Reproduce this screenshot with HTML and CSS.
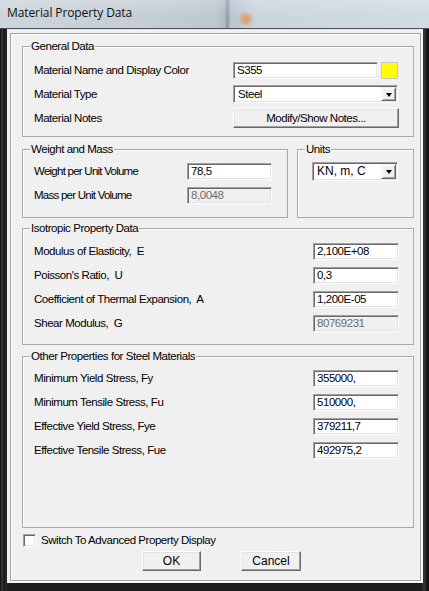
FILE: index.html
```html
<!DOCTYPE html>
<html>
<head>
<meta charset="utf-8">
<title>Material Property Data</title>
<link rel="stylesheet" href="styles.css">
</head>
<body>
<div class="window">
  <div class="titlebar">
    <span class="title">Material Property Data</span>
    <span class="glass-blob"></span>
  </div>
  <div class="frame">
    <div class="client">
      <div class="panel">
        <fieldset class="group general">
          <legend>General Data</legend>
          <div class="rows">
            <div class="row">
              <span class="label wide">Material Name and Display Color</span>
              <span class="textbox name">S355</span>
              <span class="swatch"></span>
            </div>
            <div class="row">
              <span class="label wide">Material Type</span>
              <span class="combo type"><span class="combo-text">Steel</span><span class="drop"><span class="tri"></span></span></span>
            </div>
            <div class="row">
              <span class="label wide">Material Notes</span>
              <span class="btn notes">Modify/Show Notes...</span>
            </div>
          </div>
        </fieldset>

        <div class="pair">
          <fieldset class="group weight">
            <legend>Weight and Mass</legend>
            <div class="rows">
              <div class="row">
                <span class="label mid">Weight per Unit Volume</span>
                <span class="textbox short">78,5</span>
              </div>
              <div class="row">
                <span class="label mid">Mass per Unit Volume</span>
                <span class="textbox short disabled">8,0048</span>
              </div>
            </div>
          </fieldset>
          <fieldset class="group units">
            <legend>Units</legend>
            <div class="rows">
              <div class="row">
                <span class="combo unit"><span class="combo-text">KN, m, C</span><span class="drop"><span class="tri"></span></span></span>
              </div>
            </div>
          </fieldset>
        </div>

        <fieldset class="group iso">
          <legend>Isotropic Property Data</legend>
          <div class="rows">
            <div class="row"><span class="label grow">Modulus of Elasticity,&nbsp; E</span><span class="textbox value">2,100E+08</span></div>
            <div class="row"><span class="label grow">Poisson's Ratio,&nbsp; U</span><span class="textbox value">0,3</span></div>
            <div class="row"><span class="label grow">Coefficient of Thermal Expansion,&nbsp; A</span><span class="textbox value">1,200E-05</span></div>
            <div class="row"><span class="label grow">Shear Modulus,&nbsp; G</span><span class="textbox value disabled">80769231</span></div>
          </div>
        </fieldset>

        <fieldset class="group other">
          <legend>Other Properties for Steel Materials</legend>
          <div class="rows">
            <div class="row"><span class="label grow">Minimum Yield Stress, Fy</span><span class="textbox value">355000,</span></div>
            <div class="row"><span class="label grow">Minimum Tensile Stress, Fu</span><span class="textbox value">510000,</span></div>
            <div class="row"><span class="label grow">Effective Yield Stress, Fye</span><span class="textbox value">379211,7</span></div>
            <div class="row"><span class="label grow">Effective Tensile Stress, Fue</span><span class="textbox value">492975,2</span></div>
          </div>
        </fieldset>

        <div class="check">
          <span class="checkbox"></span>
          <span class="check-label">Switch To Advanced Property Display</span>
        </div>

        <div class="buttons">
          <span class="btn ok">OK</span>
          <span class="btn cancel">Cancel</span>
        </div>
      </div>
    </div>
  </div>
</div>
</body>
</html>
```

FILE: styles.css
```css
html, body {
  margin: 0;
  padding: 0;
  background: #1a1a1a;
}

body {
  width: 429px;
  height: 591px;
  overflow: hidden;
  font-family: "Liberation Sans", Arial, sans-serif;
  font-size: 11.5px;
  letter-spacing: -0.45px;
  color: #000;
}

.window {
  width: 429px;
  height: 591px;
  display: flex;
  flex-direction: column;
}

.titlebar {
  height: 29px;
  flex: none;
  position: relative;
  display: flex;
  align-items: center;
  padding-left: 7px;
  padding-bottom: 3px;
  box-sizing: border-box;
  background:
    linear-gradient(to bottom, rgba(255,255,255,0.2) 0, rgba(255,255,255,0) 60%),
    linear-gradient(to right, #cdd5dc 0, #c6cfd7 30%, #bfc8d0 50%, #b2bcc5 52.3%, #8e98a2 53%, #bac5cf 53.8%, #cbd5de 60%, #d2dbe3 100%);
  border-bottom: 1px solid #4a4f55;
}

.title {
  font-family: "Open Sans", "Noto Sans", "Liberation Sans", sans-serif;
  font-size: 12px;
  letter-spacing: -0.1px;
  color: #101010;
}

.glass-blob {
  position: absolute;
  left: 238px;
  top: 12px;
  width: 16px;
  height: 14px;
  border-radius: 50%;
  background: radial-gradient(circle, rgba(235,130,40,0.7) 0, rgba(235,130,40,0.3) 50%, rgba(235,130,40,0) 75%);
}

.frame {
  flex: 1;
  display: flex;
  padding: 0 6px 8px 7px;
  background: linear-gradient(to right, #0c0c0c 0, #3a3a3a 2px, #151515 4px, #2b2b2b 6px, #1d1d1d 7px, #1d1d1d 422px, #3c3c3c 424px, #121212 427px);
}

.client {
  flex: 1;
  background: #f0f0f0;
  padding: 3px 2px 2px 3px;
  display: flex;
  border-top: 1px solid #e6e6e6;
}

.panel {
  flex: 1;
  display: flex;
  flex-direction: column;
  border: 1px solid #a0a0a0;
  box-shadow: inset 1px 1px 0 #ffffff, 1px 1px 0 #ffffff;
  padding: 5px 6px 0 11px;
}

.group {
  margin: 0;
  padding: 0;
  min-width: 0;
  border: 1px solid #a8a8a8;
  box-shadow: inset 1px 1px 0 #ffffff;
}

.group legend {
  margin-left: 7px;
  padding: 0 1px;
  line-height: 14px;
  background: #f0f0f0;
}

.rows {
  display: flex;
  flex-direction: column;
}

.row {
  height: 24px;
  display: flex;
  align-items: center;
}

.label {
  white-space: nowrap;
  flex: none;
}

.general .rows { padding: 5px 14px 6px 11px; }
.label.wide { width: 199px; }

.pair {
  display: flex;
  gap: 9px;
  margin-top: 5px;
}

.weight { width: 266px; box-sizing: border-box; flex: none; }
.weight .rows { padding: 3px 15px 10px 11px; }
.label.mid { width: 153px; letter-spacing: -0.75px; }

.units { flex: 1; }
.units .rows { padding: 3px 14px 10px 14px; }

.iso { margin-top: 3px; }
.iso .rows { padding: 4px 14px 9px 11px; }

.other { margin-top: 4px; }
.other .rows { padding: 3px 14px 65px 11px; }

.label.grow { flex: 1; }

.textbox {
  box-sizing: border-box;
  height: 17px;
  display: flex;
  align-items: center;
  padding: 0 3px;
  background: #ffffff;
  border: 1px solid;
  border-color: #a0a0a0 #ffffff #ffffff #a0a0a0;
  box-shadow: inset 1px 1px 0 #6a6a6a, inset -1px -1px 0 #e3e3e3;
  white-space: nowrap;
  line-height: 15px;
}

.textbox.disabled {
  background: #f0f0f0;
  color: #6d6d6d;
}

.textbox.name { width: 145px; }
.textbox.short { width: 86px; }
.textbox.value { width: 86px; }

.swatch {
  width: 17px;
  height: 17px;
  box-sizing: border-box;
  margin-left: 3px;
  background: #ffff00;
  border: 1px solid #c8c8c8;
}

.combo {
  box-sizing: border-box;
  height: 18px;
  display: flex;
  align-items: stretch;
  background: #ffffff;
  border: 1px solid;
  border-color: #a0a0a0 #ffffff #ffffff #a0a0a0;
  box-shadow: inset 1px 1px 0 #6a6a6a, inset -1px -1px 0 #e3e3e3;
  padding: 1px;
}

.combo.type { width: 165px; }
.combo.unit { width: 86px; height: 19px; }

.combo-text {
  flex: 1;
  display: flex;
  align-items: center;
  padding-left: 3px;
  white-space: nowrap;
}

.combo.unit .combo-text { font-size: 12px; letter-spacing: 0; }

.drop {
  width: 15px;
  flex: none;
  box-sizing: border-box;
  background: #f0f0f0;
  border: 1px solid;
  border-color: #f0f0f0 #6a6a6a #6a6a6a #f0f0f0;
  box-shadow: inset 1px 1px 0 #ffffff, inset -1px -1px 0 #a0a0a0;
  display: flex;
  align-items: center;
  justify-content: center;
}

.tri {
  width: 0;
  height: 0;
  border-left: 3.5px solid transparent;
  border-right: 3.5px solid transparent;
  border-top: 4px solid #000;
  margin-top: 1px;
}

.btn {
  box-sizing: border-box;
  display: flex;
  align-items: center;
  justify-content: center;
  background: #f0f0f0;
  border: 1px solid;
  border-color: #ffffff #696969 #696969 #ffffff;
  box-shadow: inset -1px -1px 0 #a0a0a0, inset 1px 1px 0 #e3e3e3;
  white-space: nowrap;
}

.btn.notes {
  width: 166px;
  height: 20px;
}

.check {
  display: flex;
  align-items: center;
  height: 14px;
  margin-top: 5px;
  padding-left: 1px;
}

.checkbox {
  width: 13px;
  height: 13px;
  box-sizing: border-box;
  background: #ffffff;
  border: 1px solid;
  border-color: #a0a0a0 #ffffff #ffffff #a0a0a0;
  box-shadow: inset 1px 1px 0 #6a6a6a, inset -1px -1px 0 #e3e3e3;
  margin-right: 5px;
}

.buttons {
  display: flex;
  gap: 40px;
  margin-top: 4px;
  padding-left: 120px;
}

.btn.ok,
.btn.cancel {
  height: 20px;
  font-size: 12px;
  letter-spacing: 0;
}

.btn.ok { width: 59px; }
.btn.cancel { width: 60px; }
```
